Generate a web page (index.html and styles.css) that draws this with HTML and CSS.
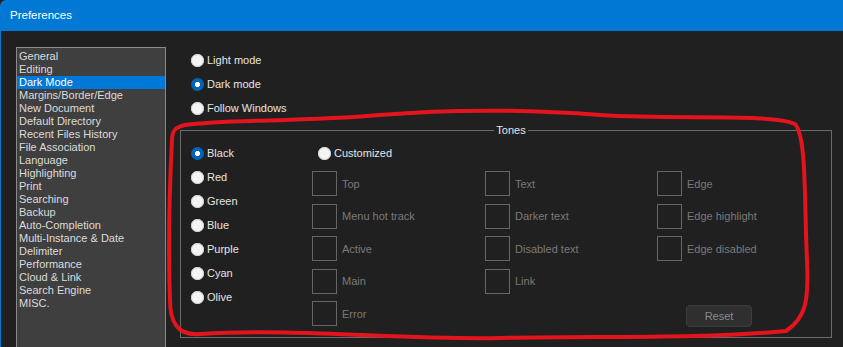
FILE: index.html
```html
<!DOCTYPE html>
<html>
<head>
    <meta charset="utf-8" />
    <title>Preferences</title>
    <link rel="stylesheet" href="styles.css">
</head>
<body>
    <div class="window">
        <div class="titlebar">Preferences</div>
        <div class="client">
            <ul class="pages">
                <li>General</li>
                <li>Editing</li>
                <li class="selected">Dark Mode</li>
                <li>Margins/Border/Edge</li>
                <li>New Document</li>
                <li>Default Directory</li>
                <li>Recent Files History</li>
                <li>File Association</li>
                <li>Language</li>
                <li>Highlighting</li>
                <li>Print</li>
                <li>Searching</li>
                <li>Backup</li>
                <li>Auto-Completion</li>
                <li>Multi-Instance &amp; Date</li>
                <li>Delimiter</li>
                <li>Performance</li>
                <li>Cloud &amp; Link</li>
                <li>Search Engine</li>
                <li>MISC.</li>
            </ul>

            <div class="panel">
                <div class="modes">
                    <label class="radio"><input type="radio" name="mode"> Light mode</label>
                    <label class="radio"><input type="radio" name="mode" checked> Dark mode</label>
                    <label class="radio"><input type="radio" name="mode"> Follow Windows</label>
                </div>

                <fieldset class="tones">
                    <legend>Tones</legend>
                    <div class="tone-list">
                        <label class="radio"><input type="radio" name="tone" checked> Black</label>
                        <label class="radio"><input type="radio" name="tone"> Red</label>
                        <label class="radio"><input type="radio" name="tone"> Green</label>
                        <label class="radio"><input type="radio" name="tone"> Blue</label>
                        <label class="radio"><input type="radio" name="tone"> Purple</label>
                        <label class="radio"><input type="radio" name="tone"> Cyan</label>
                        <label class="radio"><input type="radio" name="tone"> Olive</label>
                    </div>
                    <div class="custom">
                        <label class="radio custom-radio"><input type="radio" name="tone"> Customized</label>
                        <div class="swatches">
                            <div class="swatch"><span class="box"></span>Top</div>
                            <div class="swatch"><span class="box"></span>Text</div>
                            <div class="swatch"><span class="box"></span>Edge</div>
                            <div class="swatch"><span class="box"></span>Menu hot track</div>
                            <div class="swatch"><span class="box"></span>Darker text</div>
                            <div class="swatch"><span class="box"></span>Edge highlight</div>
                            <div class="swatch"><span class="box"></span>Active</div>
                            <div class="swatch"><span class="box"></span>Disabled text</div>
                            <div class="swatch"><span class="box"></span>Edge disabled</div>
                            <div class="swatch"><span class="box"></span>Main</div>
                            <div class="swatch"><span class="box"></span>Link</div>
                            <div></div>
                            <div class="swatch"><span class="box"></span>Error</div>
                            <div></div>
                            <div><button class="reset" disabled>Reset</button></div>
                        </div>
                    </div>
                </fieldset>
            </div>
        </div>
    </div>

    <!-- hand-drawn highlight over the Tones group -->
    <svg class="scribble" width="843" height="347" viewBox="0 0 843 347">
        <path d="M185 125 C230 119 300 122 380 115 C440 110 520 109 600 115 C680 120 770 113 795 124 C807 138 804 200 807 260 C809 300 806 318 786 331 C700 339 600 336 500 338 C400 340 300 328 200 334 C176 336 170 320 170 300 C168 250 170 180 172 140 C172 130 176 127 185 125 Z"
              fill="none" stroke="#e3141b" stroke-width="4" stroke-linejoin="round"/>
    </svg>
</body>
</html>
```

FILE: styles.css
```css
html, body {
    margin: 0;
    height: 347px;
    overflow: hidden;
    background: #202020;
}
body {
    font-family: "Liberation Sans", Arial, sans-serif;
    font-size: 11px;
    color: #e0e0e0;
    position: relative;
}
.window {
    display: flex;
    flex-direction: column;
    height: 347px;
}
.titlebar {
    height: 31px;
    flex-shrink: 0;
    background: #0078d4;
    color: #fff;
    font-size: 11.5px;
    line-height: 31px;
    padding-left: 10px;
    border-top-left-radius: 6px;
}
.client {
    flex: 1;
    display: flex;
    border-left: 1px solid #0078d4;
    padding-top: 16px;
    min-height: 0;
}
/* list runs on past the bottom edge, so no bottom border */
.pages {
    list-style: none;
    margin: 0 0 0 15px;
    padding: 2px 0 0;
    width: 148px;
    flex-shrink: 0;
    background: #3f3f3f;
    border: 1px solid #8a8a8a;
    border-bottom: none;
    color: #dcdcdc;
}
.pages li {
    height: 13px;
    line-height: 13px;
    padding-left: 2px;
    white-space: nowrap;
}
.pages li.selected {
    background: #0078d7;
    color: #fff;
}
.panel {
    flex: 1;
    padding: 1px 11px 0 14px;
}
.modes {
    padding-left: 11px;
}
.radio {
    display: flex;
    align-items: center;
    gap: 3px;
    height: 24px;
    color: #e6e6e6;
    white-space: nowrap;
}
.radio input {
    appearance: none;
    width: 13px;
    height: 13px;
    margin: 0;
    border-radius: 50%;
    background: #f4f4f4;
    box-shadow: inset 0 0 0 1px #cfcfcf;
    flex-shrink: 0;
}
.radio input:checked {
    background: radial-gradient(circle, #fff 0 2.3px, #0063b9 2.9px);
    box-shadow: none;
}
.tones {
    margin: 3px 0 0;
    padding: 4px 0 11px 10px;
    border: 1px solid #6b6b6b;
    display: flex;
    min-width: 0;
}
.tones legend {
    margin: 0 auto;
    padding: 0 2px;
    line-height: 14px;
    color: #e6e6e6;
}
.tone-list {
    width: 121px;
    flex-shrink: 0;
}
.custom {
    flex: 1;
}
.custom-radio {
    margin-left: 6px;
}
.swatches {
    margin-top: 6px;
    display: grid;
    grid-template-columns: 173px 172px 1fr;
    grid-auto-rows: 25px;
    row-gap: 7.5px;
}
.swatch {
    display: flex;
    align-items: center;
    gap: 5px;
    color: #7a7a7a;
}
.box {
    width: 23px;
    height: 23px;
    border: 1px solid #666;
}
.reset {
    margin: 4px 0 0 29px;
    width: 66px;
    height: 22px;
    font-family: inherit;
    font-size: 11px;
    color: #8a8a8a;
    background: #2f2f2f;
    border: 1px solid #3c3c3c;
    border-radius: 4px;
}
.scribble {
    position: absolute;
    top: 0;
    left: 0;
    pointer-events: none;
}
```
